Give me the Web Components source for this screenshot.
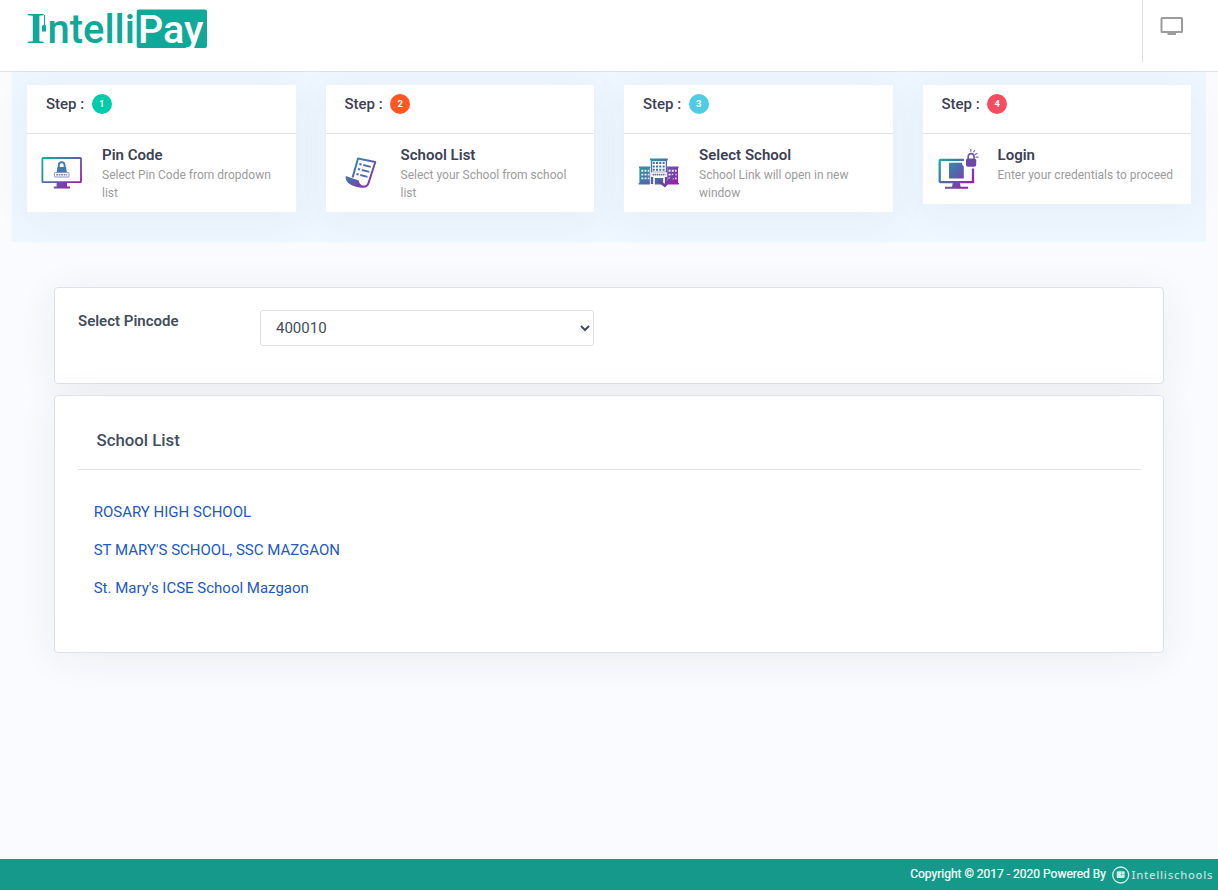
<!DOCTYPE html>
<html lang="en">
<head>
<meta charset="utf-8">
<title>IntelliPay</title>
<style>
html,body{margin:0;height:100%}
body{font-family:Roboto,"Liberation Sans",sans-serif;font-size:15px;line-height:1.5;color:#424e5e;background:#fafbff;overflow:hidden}
</style>
</head>
<body>
<pay-app></pay-app>
<script>
const define = (name, markup) => {
  const tpl = document.createElement('template');
  tpl.innerHTML = markup;
  customElements.define(name, class extends HTMLElement {
    constructor() {
      super();
      this.attachShadow({mode: 'open'}).append(tpl.content.cloneNode(true));
    }
  });
};

define('pay-logo', `
<style>:host{display:block;width:190px;height:62px}svg{display:block}</style>
<svg width="190" height="62" viewBox="20 0 190 62" fill="#10a898">
  <text x="25.5" y="43.2" font-family="Liberation Serif,serif" font-size="44" textLength="20.3" lengthAdjust="spacingAndGlyphs">I</text>
  <rect x="33.6" y="15" width="5.8" height="27"/>
  <path d="M44 15h1v9.500l1 1.500v5.500h-4v-5.500l2-1.500z"/>
  <g transform="translate(0 43) scale(1 1.05)"><text x="47.5" y="0" font-family="Roboto,sans-serif" font-weight="500" font-size="38" textLength="87.500" lengthAdjust="spacingAndGlyphs">ntelli</text></g>
  <rect x="136.7" y="9.5" width="70.3" height="38.6" rx="2"/>
  <text x="138" y="43" font-family="Roboto,sans-serif" font-weight="500" font-size="39" fill="#fff" textLength="65.5" lengthAdjust="spacingAndGlyphs">Pay</text>
</svg>`);

define('pay-header', `
<style>
:host{display:flex;justify-content:space-between;box-sizing:border-box;height:72px;background:#fff;border-bottom:1px solid #dee2e6;padding-left:20px}
.screen{box-sizing:border-box;width:76px;height:62px;border-left:1px solid #dee2e6;padding:17px 0 0 17px}
svg{display:block}
</style>
<pay-logo></pay-logo>
<div class="screen"><svg width="24" height="19" viewBox="0 0 24 19"><rect x="1.5" y="1" width="20.5" height="14" rx=".5" fill="none" stroke="#9c9c9c" stroke-width="2"/><path d="M7.500 15.500h8.500V18H7.500z" fill="#9c9c9c"/></svg></div>`);

define('step-card', `
<style>
:host{display:block;background:#fff;box-shadow:0 7px 40px rgba(50,55,75,.05)}
header{box-sizing:border-box;height:49px;padding:9px 19px;border-bottom:1px solid #dee2e6;display:flex;align-items:flex-start;gap:7.4px;font-size:15px;line-height:20px;font-weight:500;color:#3d4156}
.badge{width:20px;height:20px;border-radius:50%;background:var(--tone);color:#fff;font-size:9.5px;font-weight:700;text-align:center}
.body{display:grid;grid-template-columns:75px 1fr;padding:12px 15px 10px 0}
.icon{padding-left:14px;padding-top:2px;min-height:46px}
h6{margin:0;font-size:15px;line-height:18px;font-weight:600;color:#3d4156;letter-spacing:.02px}
p{margin:2px 0 0;font-size:12px;line-height:18px;color:#9c9c9c}
</style>
<header><span>Step :</span><span class="badge"><slot name="number"></slot></span></header>
<div class="body"><div class="icon"><slot name="icon"></slot></div><div><h6><slot name="title"></slot></h6><p><slot></slot></p></div></div>`);

const grad = id => `<defs><linearGradient id="${id}" gradientUnits="userSpaceOnUse" x1="7" y1="9" x2="34" y2="36"><stop stop-color="#16a99c"/><stop offset=".5" stop-color="#5267ad"/><stop offset="1" stop-color="#9a22ac"/></linearGradient></defs>`;

define('pin-icon', `<style>:host,svg{display:block}</style>
<svg width="42" height="44" viewBox="0 0 42 44">${grad('g')}
<rect x="1.4" y="10" width="38.6" height="24.2" rx=".6" fill="none" stroke="url(#g)" stroke-width="1.8"/>
<path d="M15.6 34.200h10.4v4.400h3v1.8H12.8v-1.8h2.8z" fill="url(#g)"/>
<path d="M17.8 19.5v-2.3a2.9 2.9 0 0 1 5.8 0v2.3" fill="none" stroke="#427fb0" stroke-width="1.9"/>
<path d="M16.4 19h8.6l1 6H15.6z" fill="#427ab0"/>
<rect x="13.4" y="24.6" width="14.6" height="4.4" rx=".8" fill="#fff" stroke="#8d8fc2" stroke-width="1"/>
<path d="M15.2 26.8h11" stroke="#777bb9" stroke-width="1.6" stroke-dasharray="1.7 .8"/></svg>`);

define('list-icon', `<style>:host,svg{display:block}</style>
<svg width="42" height="44" viewBox="0 0 42 44">${grad('g')}
<path d="M12.6 29.5L18 10.6 35.3 14 28.6 34.8Q27.3 39.2 22.6 38.8" fill="none" stroke="url(#g)" stroke-width="2" stroke-linejoin="round"/>
<path d="M5.6 28l13.2 4.600q.6 4.600 4.800 5.200l-.6 2Q15.500 39.400 10 36.200 5.400 33.400 5.600 28z" fill="url(#g)"/>
<g stroke="#4a72ae" stroke-width="1.9"><path d="M19.400 16l2.200.5M23.300 17l7.500 1.800M17.900 21l2.200.5M21.800 22l7.500 1.800M16.400 26l2.200.5M20.300 27l7.200 1.800"/></g></svg>`);

define('school-icon', `<style>:host,svg{display:block}</style>
<svg width="42" height="44" viewBox="0 0 42 44">${grad('g')}
<path d="M1 18.600h11.300v1.500h-.5v16.400H.5V35h.9V20.100H1zM29.200 18.600h11.300v1.500H40V35h.9v1.500H29.200z" fill="url(#g)"/>
<path d="M12 10.600h17.800v1.700H29V36H12.800V12.300H12z" fill="url(#g)"/>
<path d="M14.100 13.200h13.700v10.500H14.100z" fill="#fff"/>
<g stroke="#4771a6" stroke-width="2" stroke-dasharray="2 1.300"><path d="M14.700 15h12.800M14.700 18.400h12.800M14.700 21.800h12.800"/></g>
<path d="M13.100 24.300h15.800v4.800h-2v7H15.200v-7h-2.100z" fill="#fff"/>
<path d="M14.500 26.700h13" stroke="#73729b" stroke-width="1.700" stroke-dasharray="1.500 .5"/>
<g stroke="#e8edf6" stroke-width="1.900" stroke-dasharray="2 1.200"><path d="M3.300 22.800h8M3.300 26.600h8M3.300 30.400h8M30.600 22.800h8M30.600 26.600h8M30.600 30.400h8"/></g>
<path d="M16.800 30h8.400v6.500h-8.400z" fill="#4a69a9"/>
<path d="M20 34l2-1.800 4.500 3.500L37.500 24v3.800L27 39.500z" fill="#6b41a6"/></svg>`);

define('login-icon', `<style>:host,svg{display:block}</style>
<svg width="42" height="44" viewBox="0 0 42 44">${grad('g')}
<path d="M27 11.800H3.500q-.8 0-.8.8v20.700q0 .8.800.8h32.500V20.500" fill="none" stroke="url(#g)" stroke-width="2.300"/>
<path d="M12 14.800H25q0 3.300 1.800 3.800v11.800H12z" fill="url(#g)"/>
<path d="M15.800 34.500h7l.8 4.200h7.500v2.100H8v-2.100h7z" fill="url(#g)"/>
<rect x="29" y="10.500" width="10.200" height="8.300" rx="1.800" fill="#6d48a8"/>
<path d="M31.200 11V8.500a2.900 2.900 0 0 1 5.800 0V11" fill="none" stroke="#7553ae" stroke-width="1.700"/>
<path d="M33.800 1v2.800M37.800 2l-1.400 2.300M40.500 5.200l-2.700 1.400M41.500 9.200h-3" stroke="#856abb" stroke-width="1.200"/></svg>`);

define('step-band', `
<style>
:host{display:grid;grid-template-columns:repeat(4,1fr);align-items:start;gap:30px;box-sizing:border-box;height:170px;margin:0 12px;padding:13px 15px;background:#eef7ff}
</style>
<step-card style="--tone:#00ccaa"><span slot="number">1</span><pin-icon slot="icon"></pin-icon><span slot="title">Pin Code</span>Select Pin Code from dropdown list</step-card>
<step-card style="--tone:#ff5722"><span slot="number">2</span><list-icon slot="icon"></list-icon><span slot="title">School List</span>Select your School from school list</step-card>
<step-card style="--tone:#4ecce6"><span slot="number">3</span><school-icon slot="icon"></school-icon><span slot="title">Select School</span>School Link will open in new window</step-card>
<step-card style="--tone:#f74b60"><span slot="number">4</span><login-icon slot="icon"></login-icon><span slot="title">Login</span>Enter your credentials to proceed</step-card>`);

define('pay-panel', `
<style>:host{display:block;box-sizing:border-box;background:#fff;border:1px solid #dee2e6;border-radius:4px;box-shadow:0 5px 40px rgba(40,50,60,.065)}</style>
<slot></slot>`);

define('pincode-field', `
<style>
:host{display:grid;grid-template-columns:182px 334px;padding:22px 23px}
label{font-weight:600;font-size:15px;line-height:22px}
select{box-sizing:border-box;width:334px;height:36px;border:1px solid #dee2e6;border-radius:3px;background:#fff;color:#424e5e;font:400 15px Roboto,sans-serif;padding:0 1px 0 11px;margin:0}
</style>
<label for="pin">Select Pincode</label><select id="pin"><option>400010</option></select>`);

define('school-list', `
<style>
:host{display:block;padding:22px 22px 0 23px}
h5{margin:0;box-sizing:border-box;height:52px;padding:10px 18px 0 18.500px;border-bottom:1px solid #dee2e6;font-size:16.800px;line-height:24px;font-weight:500}
nav{display:grid;grid-auto-rows:38px;padding:23px 15.700px}
a{font-size:15px;line-height:38px;color:#205ac2;text-decoration:none}
</style>
<h5>School List</h5>
<nav><a href="#">ROSARY HIGH SCHOOL</a><a href="#">ST MARY'S SCHOOL, SSC MAZGAON</a><a href="#">St. Mary's ICSE School Mazgaon</a></nav>`);

define('pay-footer', `
<style>
:host{display:flex;justify-content:flex-end;align-items:flex-start;gap:5px;box-sizing:border-box;height:31px;padding:4px 5px 0 0;background:#15998a;color:#fff;font-size:12px;line-height:22px;-webkit-text-stroke:.2px #fff}
svg{display:block;-webkit-text-stroke:0}
</style>
<span>Copyright © 2017 - 2020 Powered By</span>
<svg width="102" height="24" viewBox="0 0 102 24"><circle cx="9.700" cy="12" r="8" fill="none" stroke="#d8eeea" stroke-width="1.300"/><rect x="5.800" y="8.300" width="7.800" height="6.800" rx="1" fill="#d5edea"/><path d="M10.500 8.800v4M9.500 11.500h4" stroke="#68b9af" stroke-width=".6"/><text x="20.500" y="16.300" font-family="Noto Sans,sans-serif" font-size="11.300" font-weight="500" fill="#bfe2dd" textLength="81">Intellischools</text></svg>`);

define('pay-app', `
<style>
:host{display:flex;flex-direction:column;height:890px}
main{flex:1;padding:45px 54px 0;display:flex;flex-direction:column;gap:11px}
.pin{height:97px}.list{height:258px}
</style>
<pay-header></pay-header><step-band></step-band>
<main><pay-panel class="pin"><pincode-field></pincode-field></pay-panel><pay-panel class="list"><school-list></school-list></pay-panel></main>
<pay-footer></pay-footer>`);
</script>
</body>
</html>
